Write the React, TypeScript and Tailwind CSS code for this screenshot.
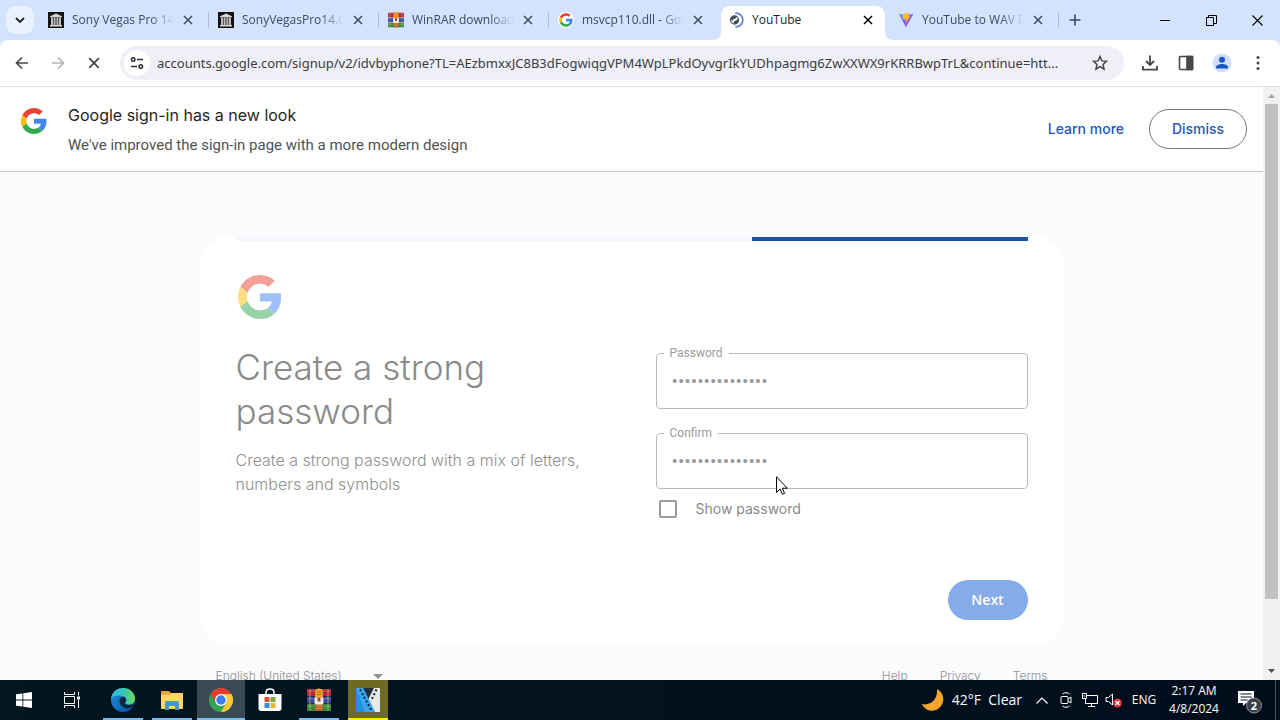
import { useState } from "react";
import type { ReactNode } from "react";

const PASSWORD = "vegas-pro-14-ok";

const URL_TEXT =
  "accounts.google.com/signup/v2/idvbyphone?TL=AEzbmxxJC8B3dFogwiqgVPM4WpLPkdOyvgrIkYUDhpagmg6ZwXXWX9rKRRBwpTrL&continue=htt...";

function GoogleG({ className }: { className: string }) {
  return (
    <svg viewBox="0 0 48 48" className={className} aria-hidden="true">
      <path fill="#EA4335" d="M24 9.5c3.54 0 6.71 1.22 9.21 3.6l6.85-6.85C35.9 2.38 30.47 0 24 0 14.62 0 6.51 5.38 2.56 13.22l7.98 6.19C12.43 13.72 17.74 9.5 24 9.5z" />
      <path fill="#4285F4" d="M46.98 24.55c0-1.57-.15-3.09-.38-4.55H24v9.02h12.94c-.58 2.96-2.26 5.48-4.78 7.18l7.73 6c4.51-4.18 7.09-10.36 7.09-17.65z" />
      <path fill="#FBBC05" d="M10.53 28.59c-.48-1.45-.76-2.99-.76-4.59s.27-3.14.76-4.59l-7.98-6.19C.92 16.46 0 20.12 0 24c0 3.88.92 7.54 2.56 10.78l7.97-6.19z" />
      <path fill="#34A853" d="M24 48c6.48 0 11.93-2.13 15.89-5.81l-7.73-6c-2.15 1.45-4.92 2.3-8.16 2.3-6.26 0-11.57-4.22-13.47-9.91l-7.98 6.19C6.51 42.62 14.62 48 24 48z" />
    </svg>
  );
}

function ArchiveIcon() {
  return (
    <svg viewBox="0 0 16 16" className="size-4 shrink-0">
      <rect width="16" height="16" fill="#111" />
      <path d="M2 4.2 8 1.6l6 2.6v1H2z" fill="#d6d6d6" />
      <path d="M3 5.5h2.2V13H3zM5.8 5.5h1.8V13H5.8zM8.4 5.5h1.8V13H8.4zM10.8 5.5H13V13h-2.2z" fill="#bdbdbd" />
      <path d="M2 13h12v1.5H2z" fill="#d6d6d6" />
    </svg>
  );
}

function WinrarIcon({ className }: { className: string }) {
  return (
    <svg viewBox="0 0 24 24" className={className}>
      <rect x="0" y="1" width="24" height="7" rx="1" fill="#b3263b" />
      <rect x="0" y="8.5" width="24" height="7" rx="1" fill="#35479f" />
      <rect x="0" y="16" width="24" height="7" rx="1" fill="#2f8a3c" />
      <path d="M3 1v22M21 1v22" stroke="#e7b25a" strokeWidth="1.2" opacity=".6" />
      <path d="M0 3.2h24M0 10.6h24M0 18.2h24" stroke="#fff" strokeWidth=".7" opacity=".35" />
      <rect x="8" y="1" width="8" height="22" fill="#b4622a" />
      <path d="M8.5 3c0-1.5 1.5-2.5 3.5-2.5s3.5 1 3.5 2.5l.5 7H8z" fill="#f2a431" />
      <path d="M10 4h4M10 6.5h4" stroke="#b75a1c" strokeWidth="1" />
      <path d="M9 18h6M9 20.5h6" stroke="#e29a4a" strokeWidth="1" />
      <rect x="7.5" y="9.5" width="9" height="7" rx="1.5" fill="#efebe4" />
      <path d="M10.5 9.5v4h3v-4" fill="#a0462c" />
    </svg>
  );
}

function LoadingIcon() {
  return (
    <svg viewBox="0 0 16 16" className="size-4 shrink-0" fill="none">
      <circle cx="6.5" cy="8" r="4" stroke="#4a5563" strokeWidth="1.3" />
      <path d="M2.8 6.5 5 4.5l3.500-.3-1 2.300-2 .5-.5 1.500-1.800-.3zM5.500 9.500l2.500-1 2-1.500.3 2.500L8 12l-2-.5z" fill="#3d4856" />
      <path d="M8 1.2a6.8 6.8 0 0 1 0 13.6" stroke="#5f82cf" strokeWidth="1.7" strokeLinecap="round" />
    </svg>
  );
}

function ViteIcon() {
  return (
    <svg viewBox="0 0 16 16" className="size-4 shrink-0">
      <defs>
        <linearGradient id="vite" x1="0" y1="0" x2="1" y2="1">
          <stop offset="0" stopColor="#5aa2f5" />
          <stop offset="1" stopColor="#b52be8" />
        </linearGradient>
      </defs>
      <path d="M.5 1.8 8 15.2 15.5 1.8 8 3.2z" fill="url(#vite)" />
      <path d="M4.500 2.200 10.600.8 10.500 4l1.700.2L8 10.500 7.500 7H5z" fill="#fbb928" />
    </svg>
  );
}

const TABS = [
  { title: "Sony Vegas Pro 14", icon: <ArchiveIcon />, active: false },
  { title: "SonyVegasPro14.0", icon: <ArchiveIcon />, active: false },
  { title: "WinRAR download", icon: <WinrarIcon className="size-4 shrink-0" />, active: false },
  { title: "msvcp110.dll - Goo", icon: <GoogleG className="size-4 shrink-0 rounded-full bg-white p-px" />, active: false },
  { title: "YouTube", icon: <LoadingIcon />, active: true },
  { title: "YouTube to WAV D", icon: <ViteIcon />, active: false },
];

function Cross({ className }: { className: string }) {
  return (
    <svg viewBox="0 0 10 10" className={className} fill="none" stroke="currentColor">
      <path d="M1 1l8 8M9 1l-8 8" strokeWidth="1.5" />
    </svg>
  );
}

function Tab({ title, icon, active, last }: { title: string; icon: ReactNode; active: boolean; last: boolean }) {
  const beforeActive = title.startsWith("msvcp");
  return (
    <div className="relative flex h-full w-[170px] items-center">
      {active && (
        <svg viewBox="0 0 182 34" className="absolute bottom-0 -left-[7px] h-[34px] w-[182px]" aria-hidden="true">
          <path d="M0 34c6 0 9-3 9-9V10C9 4 12 0 19 0h144c7 0 10 4 10 10v15c0 6 3 9 9 9z" fill="#fff" />
        </svg>
      )}
      <div className="relative flex w-full items-center pl-[9px]">
        {icon}
        <span
          className={
            active
              ? "ml-2 w-[104px] text-xs leading-[18px] whitespace-nowrap text-[#1f1f1f]"
              : "ml-2 w-[104px] mask-r-from-75% mask-r-to-98% text-xs leading-[18px] whitespace-nowrap text-[#3c4a63]"
          }
        >
          {title}
        </span>
        <button
          aria-label={`Close ${title}`}
          className={active ? "ml-1 flex size-4 items-center justify-center text-black" : "ml-1 flex size-4 items-center justify-center text-[#3c4a63]"}
        >
          <Cross className="size-2.5" />
        </button>
      </div>
      {((!active && !beforeActive) || last) && <span className="absolute right-0 bottom-3 h-4 w-px bg-[#a9bfdf]" />}
    </div>
  );
}

function TabStrip() {
  return (
    <header className="flex h-10 shrink-0 bg-[#d3e3fd]">
      <div className="flex w-[39px] shrink-0 items-center pl-1.5">
        <button aria-label="Search tabs" className="flex size-7 items-center justify-center rounded-[10px] bg-[#e9f1fe]">
          <svg viewBox="0 0 10 10" className="size-2.5" fill="none" stroke="#1f1f1f" strokeWidth="1.8">
            <path d="M1 3l4 4 4-4" />
          </svg>
        </button>
      </div>
      {TABS.map((tab, i) => (
        <Tab key={i} {...tab} last={i === TABS.length - 1} />
      ))}
      <button aria-label="New tab" className="flex w-8 items-center justify-center">
        <svg viewBox="0 0 12 12" className="size-3" stroke="#3a4560" strokeWidth="1.6">
          <path d="M6 .5v11M.5 6h11" />
        </svg>
      </button>
      <div className="ml-auto flex text-black">
        <button aria-label="Minimize" className="flex w-[46px] items-center justify-center">
          <svg viewBox="0 0 10 10" className="size-2.5" stroke="currentColor"><path d="M0 5.5h10" /></svg>
        </button>
        <button aria-label="Restore" className="flex w-[46px] items-center justify-center">
          <svg viewBox="0 0 11 11" className="size-[11px]" fill="none" stroke="currentColor">
            <path d="M.5 2.5h7v8h-7zM2.5 2.5v-2h8v8h-3" />
          </svg>
        </button>
        <button aria-label="Close window" className="flex w-[46px] items-center justify-center">
          <svg viewBox="0 0 11 11" className="size-[11px]" stroke="currentColor" strokeWidth="1.1"><path d="M.5.5l10 10M10.5.5l-10 10" /></svg>
        </button>
      </div>
    </header>
  );
}

function ToolButton({ label, children }: { label: string; children: ReactNode }) {
  return (
    <button aria-label={label} className="flex h-9 w-9 shrink-0 items-center justify-center text-[#474747]">
      {children}
    </button>
  );
}

function Toolbar() {
  return (
    <div className="shrink-0 bg-[#d3e3fd]">
      <div className="flex h-[47px] items-center rounded-t-lg border-b border-[#dfe1e5] bg-white px-1">
        <ToolButton label="Back">
          <svg viewBox="0 0 16 16" className="size-4" fill="none" stroke="currentColor" strokeWidth="1.7"><path d="M14 8H3M8 2.5 2.5 8 8 13.5" /></svg>
        </ToolButton>
        <ToolButton label="Forward">
          <svg viewBox="0 0 16 16" className="size-4" fill="none" stroke="#b4b4b4" strokeWidth="1.7"><path d="M2 8h11M8 2.5 13.5 8 8 13.5" /></svg>
        </ToolButton>
        <ToolButton label="Stop loading">
          <Cross className="size-3" />
        </ToolButton>
        <div className="mx-2 flex h-[34px] min-w-0 flex-1 items-center rounded-full bg-[#eeeff7] pr-2 pl-1">
          <button aria-label="View site information" className="flex size-[26px] shrink-0 items-center justify-center rounded-full bg-white">
            <svg viewBox="0 0 14 14" className="size-3.5" fill="none" stroke="#303030" strokeWidth="1.6">
              <circle cx="3.2" cy="3.5" r="1.7" />
              <path d="M7 3.5h6M1 10.5h6" />
              <circle cx="10.8" cy="10.5" r="1.7" />
            </svg>
          </button>
          <input
            aria-label="Address"
            readOnly
            value={URL_TEXT}
            className="ml-[7px] min-w-0 flex-1 bg-transparent font-[Noto_Sans,sans-serif] text-[13px] leading-5 text-[#3b3c42] outline-none"
          />
          <button aria-label="Bookmark this tab" className="flex size-8 shrink-0 items-center justify-center">
            <svg viewBox="0 0 16 16" className="size-4" fill="none" stroke="#474747" strokeWidth="1.5">
              <path d="M8 1.5l1.9 4.4 4.7.4-3.6 3.1 1.1 4.7L8 11.6l-4.1 2.5L5 9.4 1.4 6.3l4.7-.4z" />
            </svg>
          </button>
        </div>
        <ToolButton label="Downloads">
          <svg viewBox="0 0 16 16" className="size-4" fill="none" stroke="currentColor" strokeWidth="1.8">
            <path d="M8 .5v9M4 6l4 4 4-4M1 11v3.6h14V11" />
          </svg>
        </ToolButton>
        <ToolButton label="Side panel">
          <svg viewBox="0 0 16 16" className="size-4" fill="none" stroke="currentColor" strokeWidth="1.6">
            <rect x="1.5" y="1.5" width="13" height="13" rx="1" />
            <path d="M9 1.5h5.5v13H9z" fill="currentColor" />
          </svg>
        </ToolButton>
        <ToolButton label="Profile">
          <svg viewBox="0 0 20 20" className="size-5">
            <circle cx="10" cy="10" r="9.5" fill="#cfe0fb" />
            <circle cx="10" cy="6.8" r="3" fill="#1a55c4" />
            <path d="M4 15.5v-1.3c0-2 3.5-3.2 6-3.2s6 1.2 6 3.2v1.3z" fill="#1a55c4" />
          </svg>
        </ToolButton>
        <ToolButton label="Menu">
          <svg viewBox="0 0 4 16" className="h-4 w-1" fill="currentColor">
            <circle cx="2" cy="2.5" r="1.5" /><circle cx="2" cy="8" r="1.5" /><circle cx="2" cy="13.5" r="1.5" />
          </svg>
        </ToolButton>
      </div>
    </div>
  );
}

function Banner() {
  return (
    <section className="flex h-[85px] items-center border-b border-[#c4c7c5] bg-white pr-4 pl-5 font-[Inter,sans-serif]">
      <GoogleG className="-mt-4 size-7 p-px" />
      <div className="ml-5 flex-1">
        <h2 className="text-base leading-6 text-[#1f1f1f]">Google sign-in has a new look</h2>
        <p className="mt-2 font-[Roboto,sans-serif] text-[15px] leading-5 text-[#505352]">We've improved the sign-in page with a more modern design</p>
      </div>
      <a href="#learn" className="mr-[25px] text-sm font-medium text-[#2458b8]">Learn more</a>
      <button className="h-10 w-[98px] rounded-full border border-[#747775] text-sm font-medium text-[#2458b8]">Dismiss</button>
    </section>
  );
}

function PasswordField({ id, label, shown }: { id: string; label: string; shown: boolean }) {
  return (
    <div className="relative h-14">
      <input
        id={id}
        type={shown ? "text" : "password"}
        defaultValue={PASSWORD}
        className="h-full w-full rounded-[4px] border border-[#b9bbba] bg-white px-[15px] font-[Roboto,sans-serif] text-[19px] text-[#9a9a9a] outline-none"
      />
      <label htmlFor={id} className="absolute -top-2 left-2 bg-white px-1.5 font-[Roboto,sans-serif] text-xs leading-4 text-[#9a9b9a]">
        {label}
      </label>
    </div>
  );
}

function SignupPage() {
  const [shown, setShown] = useState(false);
  return (
    <div className="relative flex min-h-0 flex-1 overflow-hidden">
      <div className="min-w-0 flex-1 bg-[#fafbfd]">
        <Banner />
        <main className="mx-auto w-full max-w-[864px] pt-[65px]">
          <form className="rounded-[28px] bg-white px-9 pb-6" onSubmit={(e) => e.preventDefault()}>
            <div className="flex h-1 justify-end bg-[#f5f7fa]">
              <div className="w-[276px] bg-[#1b55ab]" />
            </div>
            <GoogleG className="mt-8 size-12 p-0.5 opacity-50" />
            <div className="mt-6 grid grid-cols-2 gap-12 font-[Inter,sans-serif] text-[#8a8a8a]">
              <div>
                <h1 className="text-[35px] leading-[44px] font-light">Create a strong password</h1>
                <p className="mt-[15px] text-base leading-6 font-light text-[#8f908f]">Create a strong password with a mix of letters, numbers and symbols</p>
              </div>
              <div className="flex flex-col pt-2">
                <PasswordField id="password" label="Password" shown={shown} />
                <div className="h-6" />
                <PasswordField id="confirm" label="Confirm" shown={shown} />
                <label className="mt-2.5 ml-[3px] flex items-center gap-[19px] text-sm leading-5">
                  <input
                    type="checkbox"
                    checked={shown}
                    onChange={(e) => setShown(e.target.checked)}
                    className="size-[18px] appearance-none rounded-[2px] border-2 border-[#9c9d9c] checked:bg-[#85abe8]"
                  />
                  Show password
                </label>
              </div>
            </div>
            <div className="mt-[61px] flex justify-end">
              <button className="h-10 w-20 rounded-full bg-[#85abe8] text-sm font-semibold text-white">Next</button>
            </div>
          </form>
          <footer className="mt-6 flex justify-between px-4 font-[Inter,sans-serif] text-xs leading-4 font-light text-[#8f9092]">
            <button className="flex w-[167px] items-center justify-between">
              English (United States)
              <svg viewBox="0 0 10 5" className="h-[5px] w-2.5" fill="#8f9091"><path d="M0 0h10L5 5z" /></svg>
            </button>
            <nav className="flex gap-8">
              <a href="#help">Help</a>
              <a href="#privacy">Privacy</a>
              <a href="#terms">Terms</a>
            </nav>
          </footer>
        </main>
      </div>
      <div className="flex w-[17px] shrink-0 flex-col items-center bg-[#f1f1f1]">
        <svg viewBox="0 0 17 17" className="size-[17px] shrink-0" fill="#a3a3a3"><path d="M5 11h7L8.5 7z" /></svg>
        <div className="w-[13px] flex-1 pb-16"><div className="h-full bg-[#c1c1c1]" /></div>
        <svg viewBox="0 0 17 17" className="size-[17px] shrink-0" fill="#505050"><path d="M5 6h7l-3.5 4z" /></svg>
      </div>
      <svg viewBox="0 0 12 19" className="absolute top-[389px] left-[776px] h-[19px] w-3" aria-hidden="true">
        <path d="M.5.8v15.7l3.6-3.5 2.3 5.3 2.2-.9-2.3-5.2h5z" fill="#fff" stroke="#000" />
      </svg>
    </div>
  );
}

function EdgeIcon() {
  return (
    <svg viewBox="0 0 24 24" className="size-6">
      <defs>
        <linearGradient id="edgeTop" x1="0" y1="0" x2="1" y2="0">
          <stop offset="0" stopColor="#2fb4e9" />
          <stop offset=".6" stopColor="#3cc9b0" />
          <stop offset="1" stopColor="#6fdc55" />
        </linearGradient>
        <linearGradient id="edgeBody" x1="0" y1="0" x2="1" y2="1">
          <stop offset="0" stopColor="#1f8fe0" />
          <stop offset="1" stopColor="#0c4fa6" />
        </linearGradient>
      </defs>
      <circle cx="12" cy="12" r="12" fill="url(#edgeBody)" />
      <path d="M0 11C.6 4.5 5.5 0 12 0c7 0 12 5 12 10.5 0 3.5-2.5 6-6 6-3 0-4-1.3-3.300-2.300.9-1.300 1-2.400.3-3.700C13.500 7.500 4.500 5.500 0 11z" fill="url(#edgeTop)" />
      <path d="M12.500 9C9.500 9 8 11.500 8.500 14c.8 4 4.500 6.500 8.500 6.300 2 0 3.600-.9 5-2 1-.8 1.500-1.500 2-3-1.500 1-3.500 1.700-6 1.700-1.500 0-2.800-.2-3.800-.5-1-1.200-.6-2 .4-3C15.500 11.500 15 9 12.500 9z" fill="#06283c" />
    </svg>
  );
}

function ExplorerIcon() {
  return (
    <svg viewBox="0 0 24 24" className="size-6">
      <path d="M1 4c0-.6.4-1 1-1h7l2 2h11c.6 0 1 .4 1 1v3H1z" fill="#e6a93c" />
      <path d="M1 7l9-.2L12 5h11v15c0 .6-.4 1-1 1H2c-.6 0-1-.4-1-1z" fill="#fbd56b" />
      <path d="M5 14.5c0-1 .6-1.5 1.5-1.5h11c.9 0 1.5.5 1.5 1.5V22h-4v-4H9v4H5z" fill="#4795cf" />
    </svg>
  );
}

function ChromeIcon() {
  return (
    <svg viewBox="0 0 24 24" className="size-6">
      <circle cx="12" cy="12" r="12" fill="#34a350" />
      <path d="M22.4 6A12 12 0 0 1 12 24l5.2-9 1-4L12 6z" fill="#fcc934" />
      <path d="M1.6 6C3.7 2.4 7.4 0 12 0s8.3 2.4 10.4 6H12l-5.2 9z" fill="#e33b2e" />
      <circle cx="12" cy="12" r="6" fill="#fff" />
      <circle cx="12" cy="12" r="4.7" fill="#3b7ded" />
    </svg>
  );
}

function StoreIcon() {
  return (
    <svg viewBox="0 0 24 24" className="size-6">
      <path d="M8 7V4.500C8 2.500 9.500 1 12 1s4 1.500 4 3.500V7" fill="none" stroke="#fff" strokeWidth="1.5" />
      <path d="M.5 6h23v14.500c0 1.400-1 2.500-2.500 2.500H3C1.500 23 .5 21.900.5 20.500z" fill="#fff" />
      <path d="M6.5 9h5v5h-5z" fill="#d9532c" /><path d="M12.5 9h5v5h-5z" fill="#78a83b" />
      <path d="M6.5 15h5v5h-5z" fill="#2f8fd8" /><path d="M12.5 15h5v5h-5z" fill="#f0b429" />
    </svg>
  );
}

function VegasIcon() {
  return (
    <svg viewBox="0 0 24 24" className="size-6">
      <rect width="24" height="24" fill="#2190dd" />
      <path d="M7 0h11L12.5 11z" fill="#24313c" />
      <path d="M18 0h6v24h-5L12.5 11z" fill="#e6e8ea" />
      <path d="M0 0h7l12 24H9z" fill="#3aa6ee" />
      <path d="M4 1.500l11.500 21" stroke="#0c2334" strokeWidth="2" strokeDasharray="2 2.2" />
      <path d="M20.500 1.500 15 13" stroke="#1c1c1c" strokeWidth="2" strokeDasharray="2 2.2" />
    </svg>
  );
}

const APPS = [
  { name: "Microsoft Edge", icon: <EdgeIcon />, box: "w-12", line: "w-10 bg-[#76b9ed]" },
  { name: "File Explorer", icon: <ExplorerIcon />, box: "w-12", line: "w-10 bg-[#76b9ed]" },
  { name: "Google Chrome", icon: <ChromeIcon />, box: "w-12 bg-[#3a4a55]", line: "w-full bg-[#83bdec]" },
  { name: "Microsoft Store", icon: <StoreIcon />, box: "w-12", line: "" },
  { name: "WinRAR", icon: <WinrarIcon className="size-6" />, box: "w-12", line: "w-10 bg-[#76b9ed]" },
  { name: "Vegas Pro", icon: <VegasIcon />, box: "mx-1 w-10 bg-[#6d6a24]", line: "w-full bg-[#f8f400]" },
];

function Taskbar() {
  return (
    <footer className="flex h-10 shrink-0 bg-linear-to-r from-[#02161f] to-[#020d1c] text-white">
      <button aria-label="Start" className="flex w-12 items-center justify-center">
        <svg viewBox="0 0 16 16" className="size-4" fill="#fff">
          <path d="M0 2.3 6.5 1.4v6.2H0zM7.3 1.3 16 0v7.6H7.3zM0 8.4h6.5v6.2L0 13.700zM7.300 8.400H16V16l-8.700-1.200z" />
        </svg>
      </button>
      <button aria-label="Task view" className="mr-[3px] flex w-12 items-center justify-center">
        <svg viewBox="0 0 16 16" className="size-4" fill="none" stroke="#fff">
          <path d="M.5 4.5h10v7H.5zM.5 0v2.5h10V0M.5 16v-2.5h10V16M14.5 0v3.5M14.5 8v8" />
          <path d="M13 4.5h3v3h-3z" fill="#fff" stroke="none" />
        </svg>
      </button>
      <div className="flex gap-px">
        {APPS.map((app) => (
          <button key={app.name} aria-label={app.name} className={`relative flex items-center justify-center ${app.box}`}>
            {app.icon}
            {app.line && <span className={`absolute bottom-0 h-0.5 ${app.line}`} />}
          </button>
        ))}
      </div>
      <div className="ml-auto flex items-center">
        <button className="flex items-center gap-2 text-sm whitespace-pre">
          <svg viewBox="0 0 22 22" className="size-[22px]">
            <path d="M15 0c9 5 8 17-1 21C8 23.5 2 20 0 15c8 2 16-4 15-15z" fill="#f5a52c" />
          </svg>
          {"42°F  Clear"}
        </button>
        <button aria-label="Show hidden icons" className="ml-2 flex w-6 justify-center">
          <svg viewBox="0 0 12 7" className="h-[7px] w-3" fill="none" stroke="#fff" strokeWidth="1.2"><path d="M.5 6.5 6 1l5.5 5.5" /></svg>
        </button>
        <button aria-label="Meet now" className="flex w-6 justify-center">
          <svg viewBox="0 0 12 16" className="h-4 w-3" fill="none" stroke="#fff">
            <path d="M2.5 2C4.5.2 7.5.2 9.5 2M2.5 14c2 1.8 5 1.8 7 0" />
            <rect x="1" y="4.5" width="7" height="7" rx="1" /><path d="M8 7l3-2v6L8 9" />
          </svg>
        </button>
        <button aria-label="Network" className="flex w-6 justify-center">
          <svg viewBox="0 0 16 14" className="h-3.5 w-4" fill="none" stroke="#fff">
            <path d="M5 2.5h10.5v8H3.5V6M9.5 10.5v3M6 13.5h7" /><path d="M.5.5h4v5h-4zM1.5 3h2" />
          </svg>
        </button>
        <button aria-label="Volume muted" className="flex w-6 justify-center">
          <svg viewBox="0 0 18 16" className="h-4 w-[18px]" fill="none" stroke="#fff">
            <path d="M1 5.5h2.5L7.5 2v11l-4-3.5H1z" />
            <circle cx="12.5" cy="11" r="4.5" fill="#d6303b" stroke="none" />
            <path d="M10.5 9l4 4M14.5 9l-4 4" strokeWidth="1.2" />
          </svg>
        </button>
        <button className="w-9 text-xs">ENG</button>
        <button className="w-16 text-center text-xs leading-[18px]">
          2:17 AM
          <br />
          4/8/2024
        </button>
        <button aria-label="Notifications" className="flex w-12 justify-center">
          <svg viewBox="0 0 24 24" className="mt-1 size-6">
            <path d="M0 1h16v12H8l-3 3v-3H0z" fill="#fff" />
            <path d="M2.5 4h11M2.5 7h11M2.5 10h7" stroke="#06121f" strokeWidth="1.2" />
            <circle cx="16" cy="15.5" r="7.5" fill="#3a4148" stroke="#8b9094" />
            <text x="16" y="19.5" textAnchor="middle" fontSize="11" fontWeight="700" fill="#fff">2</text>
          </svg>
        </button>
        <span className="ml-px h-10 w-[5px] border-l border-[#4c5560]" />
      </div>
    </footer>
  );
}

export default function App() {
  return (
    <div className="flex h-screen flex-col overflow-hidden bg-white font-[Open_Sans,sans-serif]">
      <TabStrip />
      <Toolbar />
      <SignupPage />
      <Taskbar />
    </div>
  );
}
